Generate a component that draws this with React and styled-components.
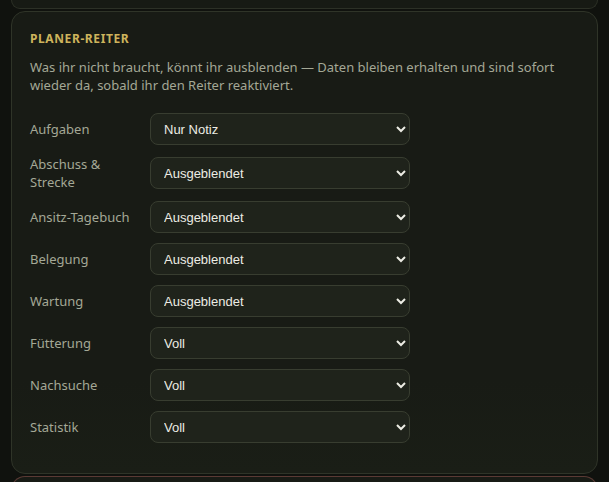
import React from 'react'
import styled, { createGlobalStyle } from 'styled-components'

const GlobalStyle = createGlobalStyle`
  html, body {
    margin: 0;
    padding: 0;
    background: #10120e;
    font-family: "Noto Sans", "Open Sans", sans-serif;
    color-scheme: dark;
  }
`

const Page = styled.div`
  display: flex;
  flex-direction: column;
  gap: 2px;
  padding: 0 11px;
`

const PrevCard = styled.div`
  height: 8px;
  background: #171a14;
  border: 1px solid #2c3026;
  border-top: none;
  border-radius: 0 0 14px 14px;
`

const Card = styled.section`
  background: linear-gradient(180deg, #181b15 0%, #181b15 80%, #1a1e16 100%);
  border: 1px solid #2f3428;
  border-radius: 14px;
  padding: 19px 18px 30px;
`

const NextCard = styled.div`
  height: 20px;
  background: #181b15;
  border: 1px solid #5a3a34;
  border-bottom: none;
  border-radius: 14px 14px 0 0;
`

const Title = styled.h2`
  margin: 0;
  font-size: 12px;
  line-height: 16px;
  font-weight: 700;
  letter-spacing: 0.6px;
  text-transform: uppercase;
  color: #cdb45c;
`

const Intro = styled.p`
  margin: 11px 0 19px;
  font-size: 13px;
  line-height: 18px;
  color: #a4a896;
`

const Grid = styled.div`
  display: grid;
  grid-template-columns: 110px 260px;
  column-gap: 10px;
  row-gap: 10px;
  align-items: center;
`

const Label = styled.label`
  font-size: 13px;
  line-height: 18px;
  color: #a4a896;
`

const Select = styled.select`
  height: 32px;
  width: 100%;
  padding: 0 6px 0 9px;
  border: 1px solid #383d30;
  border-radius: 8px;
  background: #1f231b;
  color: #ecece4;
  font-family: "Liberation Sans", Arial, sans-serif;
  font-size: 13px;
  color-scheme: dark;
  outline: none;
`

const options = ['Voll', 'Nur Notiz', 'Ausgeblendet']

const tabs = [
  ['Aufgaben', 'Nur Notiz'],
  ['Abschuss & Strecke', 'Ausgeblendet'],
  ['Ansitz-Tagebuch', 'Ausgeblendet'],
  ['Belegung', 'Ausgeblendet'],
  ['Wartung', 'Ausgeblendet'],
  ['Fütterung', 'Voll'],
  ['Nachsuche', 'Voll'],
  ['Statistik', 'Voll'],
]

export default function App() {
  return (
    <>
      <GlobalStyle />
      <Page>
        <PrevCard />
        <Card>
          <Title>Planer-Reiter</Title>
          <Intro>
            Was ihr nicht braucht, könnt ihr ausblenden — Daten bleiben erhalten und sind sofort
            wieder da, sobald ihr den Reiter reaktiviert.
          </Intro>
          <Grid>
            {tabs.map(([name, value]) => (
              <React.Fragment key={name}>
                <Label>{name}</Label>
                <Select defaultValue={value}>
                  {options.map(o => (
                    <option key={o} value={o}>{o}</option>
                  ))}
                </Select>
              </React.Fragment>
            ))}
          </Grid>
        </Card>
        <NextCard />
      </Page>
    </>
  )
}
